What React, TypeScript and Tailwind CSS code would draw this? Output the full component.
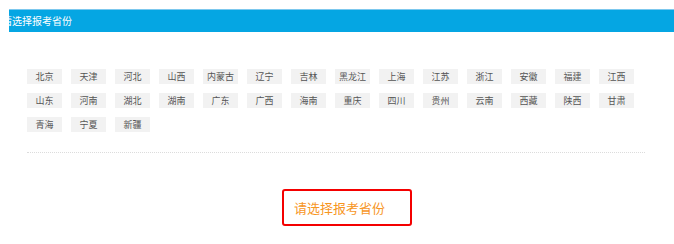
const provinces = [
  "北京", "天津", "河北", "山西", "内蒙古", "辽宁", "吉林", "黑龙江", "上海", "江苏", "浙江", "安徽", "福建", "江西",
  "山东", "河南", "湖北", "湖南", "广东", "广西", "海南", "重庆", "四川", "贵州", "云南", "西藏", "陕西", "甘肃",
  "青海", "宁夏", "新疆",
];

export default function App() {
  return (
    <div
      className="w-[674px] h-[244px] bg-white overflow-hidden"
      style={{ fontFamily: '"Noto Sans CJK SC", "Noto Sans", sans-serif' }}
    >
      {/* Title bar */}
      <div className="mt-[9px] ml-[9px] h-[23px] bg-[#05a6e3] border-t border-[#7cc8ee] overflow-hidden">
        <p className="-ml-[7px] text-[10px] leading-[22px] text-white whitespace-nowrap">请选择报考省份</p>
      </div>

      {/* Province list */}
      <div className="mt-[37px] ml-[27px] w-[610px] flex flex-wrap gap-x-[9px] gap-y-[9px]">
        {provinces.map((p) => (
          <span
            key={p}
            className="w-[35px] h-[15px] bg-[#f2f2f2] text-[#555] text-[9px] leading-[15px] text-center whitespace-nowrap"
          >
            {p}
          </span>
        ))}
      </div>

      <div className="mt-[20px] ml-[27px] w-[618px] border-t border-dotted border-[#dcdcdc]" />

      {/* Selected province */}
      <div className="mt-[36px] ml-[282px] w-[130px] h-[37px] border-2 border-[#f40000] rounded-[3px] flex items-center pl-[10px]">
        <span className="text-[13px] text-[#f7961f]">请选择报考省份</span>
      </div>
    </div>
  );
}
